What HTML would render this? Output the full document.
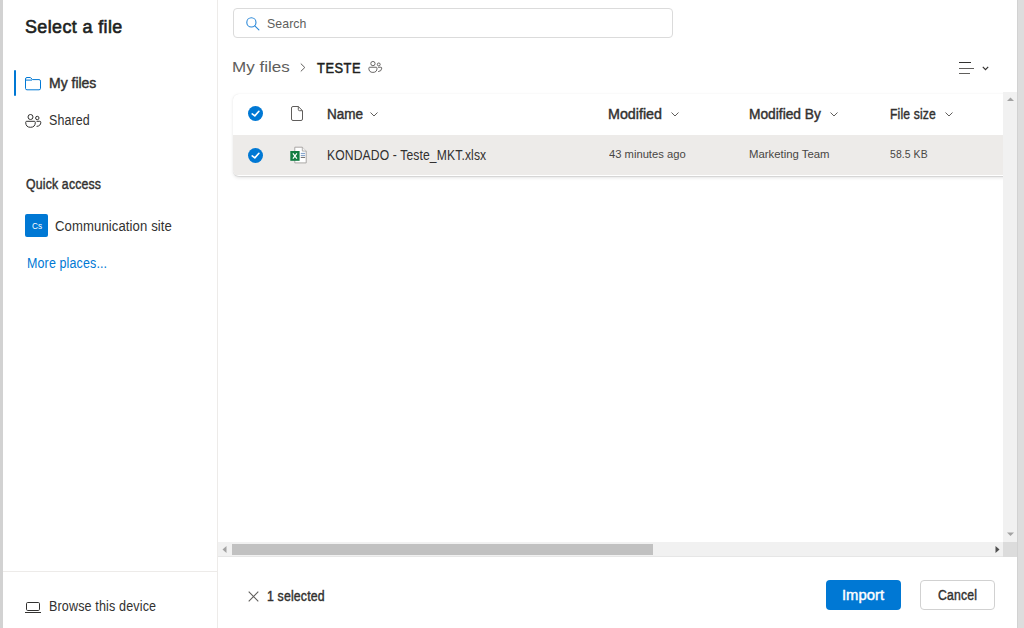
<!DOCTYPE html>
<html><head><meta charset="utf-8">
<style>
html,body{margin:0;padding:0;}
body{width:1024px;height:628px;position:relative;overflow:hidden;background:#fff;font-family:"Liberation Sans",sans-serif;}
.a{position:absolute;}
.t{position:absolute;white-space:nowrap;line-height:20px;transform-origin:0 0;font-family:"Liberation Sans",sans-serif;}
svg{position:absolute;overflow:visible;}
</style></head><body>
<!-- outer borders -->
<div class="a" style="left:0;top:0;width:3px;height:628px;background:#d2d2d2"></div>
<div class="a" style="left:1017px;top:0;width:7px;height:628px;background:#dddddd"></div>
<div class="a" style="left:1017px;top:0;width:1px;height:628px;background:#d2d2d2"></div>
<!-- dividers -->
<div class="a" style="left:217px;top:0;width:1px;height:628px;background:#edebe9"></div>
<div class="a" style="left:3px;top:571px;width:214px;height:1px;background:#edebe9"></div>
<!-- nav selection bar -->
<div class="a" style="left:14px;top:70px;width:2px;height:26px;background:#0078d4;border-radius:1px"></div>
<!-- folder icon -->
<svg style="left:25px;top:77px" width="16" height="14" viewBox="0 0 16 14">
<path d="M0.5 2 Q0.5 0.5 2 0.5 H5 Q5.6 0.5 6 1 L7.4 2.6 H14 Q15.5 2.6 15.5 4.1 V11.4 Q15.5 12.8 14 12.8 H2 Q0.5 12.8 0.5 11.4 Z M0.5 3.1 H7" fill="none" stroke="#0078d4" stroke-width="1"/>
</svg>
<!-- people icon (nav) -->
<svg style="left:25px;top:114px" width="17" height="14" viewBox="0 0 17 14">
<circle cx="5.5" cy="3" r="2.5" fill="none" stroke="#323130" stroke-width="1"/>
<circle cx="12.3" cy="4" r="1.7" fill="none" stroke="#323130" stroke-width="1"/>
<path d="M0.7 8.3 Q0.7 7.3 1.7 7.3 H9.3 Q10.3 7.3 10.3 8.3 Q10.3 13.3 5.5 13.3 Q0.7 13.3 0.7 8.3 Z" fill="none" stroke="#323130" stroke-width="1"/>
<path d="M11.5 7.3 H14.8 Q15.8 7.3 15.8 8.3 Q15.8 12 11.6 12.4" fill="none" stroke="#323130" stroke-width="1"/>
</svg>
<!-- Cs tile -->
<div class="a" style="left:25px;top:214px;width:23px;height:23px;background:#0078d4;border-radius:2px"></div>
<div class="t" style="left:31.9px;top:216.1px;font-size:9.3px;color:#fff;line-height:20px;transform:scaleX(0.88)">Cs</div>
<!-- laptop icon -->
<svg style="left:25px;top:602px" width="16" height="12" viewBox="0 0 16 12">
<rect x="1.5" y="0.5" width="13" height="8" rx="1.2" fill="none" stroke="#323130" stroke-width="1"/>
<path d="M0 10.5 H16" stroke="#323130" stroke-width="1"/>
</svg>
<!-- search box -->
<div class="a" style="left:233px;top:8px;width:438px;height:28px;border:1px solid #dbdbdb;border-radius:4px"></div>
<svg style="left:246px;top:17px" width="14" height="14" viewBox="0 0 14 14">
<circle cx="5.4" cy="5.4" r="4.6" fill="none" stroke="#2b88d8" stroke-width="1.1"/>
<path d="M8.8 8.8 L12.9 12.9" stroke="#2b88d8" stroke-width="1.1" stroke-linecap="round"/>
</svg>
<!-- breadcrumb chevron -->
<svg style="left:300px;top:63px" width="6" height="9" viewBox="0 0 6 9">
<path d="M0.8 0.6 L4.8 4.5 L0.8 8.4" fill="none" stroke="#605e5c" stroke-width="1"/>
</svg>
<!-- people icon (crumb) -->
<svg style="left:368px;top:61px" width="15" height="12" viewBox="0 0 17 14">
<circle cx="5.5" cy="3" r="2.5" fill="none" stroke="#605e5c" stroke-width="1.1"/>
<circle cx="12.3" cy="4" r="1.7" fill="none" stroke="#605e5c" stroke-width="1.1"/>
<path d="M0.7 8.3 Q0.7 7.3 1.7 7.3 H9.3 Q10.3 7.3 10.3 8.3 Q10.3 13.3 5.5 13.3 Q0.7 13.3 0.7 8.3 Z" fill="none" stroke="#605e5c" stroke-width="1.1"/>
<path d="M11.5 7.3 H14.8 Q15.8 7.3 15.8 8.3 Q15.8 12 11.6 12.4" fill="none" stroke="#605e5c" stroke-width="1.1"/>
</svg>
<!-- view switcher -->
<div class="a" style="left:959px;top:62px;width:12px;height:1px;background:#323130"></div>
<div class="a" style="left:959px;top:67.5px;width:15px;height:1px;background:#605e5c"></div>
<div class="a" style="left:959px;top:73px;width:11px;height:1px;background:#605e5c"></div>
<svg style="left:982px;top:66px" width="7" height="5" viewBox="0 0 7 5">
<path d="M0.8 0.8 L3.5 3.6 L6.2 0.8" fill="none" stroke="#323130" stroke-width="1.2"/>
</svg>

<!-- table card -->
<div class="a" style="left:218px;top:86px;width:785px;height:100px;overflow:hidden">
<div class="a" style="left:15px;top:8px;width:800px;height:82px;border-radius:6px;background:#fff;box-shadow:0 1.6px 3.6px rgba(0,0,0,0.10),0 0.3px 0.9px rgba(0,0,0,0.09);overflow:hidden">
  <div class="a" style="left:0;top:41px;width:800px;height:40px;background:#edebe9"></div>
</div></div>
<!-- check circles -->
<svg style="left:248px;top:106px" width="15" height="15" viewBox="0 0 15 15">
<circle cx="7.5" cy="7.5" r="7.5" fill="#0078d4"/>
<path d="M4.2 7.9 L6.8 9.9 L10.9 5.3" fill="none" stroke="#fff" stroke-width="1.6" stroke-linecap="round" stroke-linejoin="round"/>
</svg>
<svg style="left:248px;top:147.5px" width="15" height="15" viewBox="0 0 15 15">
<circle cx="7.5" cy="7.5" r="7.5" fill="#0078d4"/>
<path d="M4.2 7.9 L6.8 9.9 L10.9 5.3" fill="none" stroke="#fff" stroke-width="1.6" stroke-linecap="round" stroke-linejoin="round"/>
</svg>
<!-- header file icon -->
<svg style="left:291px;top:106px" width="12" height="15" viewBox="0 0 12 15">
<path d="M0.5 2 Q0.5 0.5 2 0.5 H7.3 L11.5 4.7 V13 Q11.5 14.5 10 14.5 H2 Q0.5 14.5 0.5 13 Z M7.3 0.5 V3.5 Q7.3 4.7 8.5 4.7 H11.5" fill="none" stroke="#605e5c" stroke-width="1" stroke-linejoin="round"/>
</svg>
<!-- excel icon -->
<svg style="left:290px;top:146px" width="18" height="18" viewBox="0 0 18 18">
<path d="M4.8 1.2 H12.3 L16.2 5.1 V16.9 H4.8 Z" fill="#fff" stroke="#a19f9d" stroke-width="0.9" stroke-linejoin="round"/>
<path d="M12.3 1.2 V5.1 H16.2" fill="#f3f2f1" stroke="#a19f9d" stroke-width="0.8"/>
<path d="M10.8 7.4 H15.1 M10.8 9.4 H15.1" stroke="#6a8fbf" stroke-width="0.9"/>
<path d="M10.8 11.4 H15.1" stroke="#555" stroke-width="0.9"/>
<rect x="0.3" y="5" width="9.3" height="9.8" fill="#107c41"/>
<path d="M2.9 7.3 L6.9 12.6 M6.9 7.3 L2.9 12.6" stroke="#fff" stroke-width="1.2"/>
</svg>
<!-- header chevrons -->
<svg style="left:370px;top:112px" width="8" height="5" viewBox="0 0 8 5"><path d="M0.5 0.5 L4 4 L7.5 0.5" fill="none" stroke="#605e5c" stroke-width="1"/></svg>
<svg style="left:671px;top:112px" width="8" height="5" viewBox="0 0 8 5"><path d="M0.5 0.5 L4 4 L7.5 0.5" fill="none" stroke="#605e5c" stroke-width="1"/></svg>
<svg style="left:830px;top:112px" width="8" height="5" viewBox="0 0 8 5"><path d="M0.5 0.5 L4 4 L7.5 0.5" fill="none" stroke="#605e5c" stroke-width="1"/></svg>
<svg style="left:944.5px;top:112px" width="8" height="5" viewBox="0 0 8 5"><path d="M0.5 0.5 L4 4 L7.5 0.5" fill="none" stroke="#605e5c" stroke-width="1"/></svg>

<!-- vertical scrollbar -->
<div class="a" style="left:1003px;top:92px;width:14px;height:450px;background:#f1f1f1"></div>
<svg style="left:1007px;top:97px" width="7" height="5" viewBox="0 0 7 5"><path d="M0 4 L3.5 0.5 L7 4 Z" fill="#a3a3a3"/></svg>
<svg style="left:1007px;top:532px" width="7" height="5" viewBox="0 0 7 5"><path d="M0 0.5 L3.5 4 L7 0.5 Z" fill="#a3a3a3"/></svg>
<!-- horizontal scrollbar -->
<div class="a" style="left:218px;top:542px;width:785px;height:15px;background:#f1f1f1"></div>
<div class="a" style="left:218px;top:556px;width:785px;height:1px;background:#e6e6e6"></div>
<div class="a" style="left:232px;top:544px;width:421px;height:11px;background:#c1c1c1"></div>
<svg style="left:222px;top:546px" width="5" height="7" viewBox="0 0 5 7"><path d="M4.5 0 L0.5 3.5 L4.5 7 Z" fill="#a3a3a3"/></svg>
<svg style="left:995px;top:546px" width="5" height="7" viewBox="0 0 5 7"><path d="M0.5 0 L4.5 3.5 L0.5 7 Z" fill="#505050"/></svg>
<div class="a" style="left:1003px;top:542px;width:14px;height:15px;background:#dcdcdc"></div>

<!-- footer -->
<svg style="left:248px;top:591px" width="11" height="11" viewBox="0 0 11 11"><path d="M0.7 0.7 L10.3 10.3 M10.3 0.7 L0.7 10.3" stroke="#605e5c" stroke-width="1.1"/></svg>
<div class="a" style="left:826px;top:580px;width:75px;height:30px;background:#0078d4;border-radius:4px"></div>
<div class="a" style="left:920px;top:580px;width:73px;height:28px;border:1px solid #d1d1d1;border-radius:4px;background:#fff"></div>

<div class="t" style="left:24.78px;top:17.43px;font-size:17.5px;font-weight:400;-webkit-text-stroke:0.6px #201f1e;color:#201f1e;letter-spacing:0.4px;transform:scaleX(1.0213)">Select a file</div>
<div class="t" style="left:49.10px;top:73.05px;font-size:14px;font-weight:400;-webkit-text-stroke:0.42px #323130;color:#323130;letter-spacing:0px;transform:scaleX(0.9978)">My files</div>
<div class="t" style="left:49.21px;top:109.75px;font-size:14px;font-weight:400;color:#323130;letter-spacing:0.15px;transform:scaleX(0.8886)">Shared</div>
<div class="t" style="left:25.90px;top:174.15px;font-size:14px;font-weight:400;-webkit-text-stroke:0.42px #323130;color:#323130;letter-spacing:0.2px;transform:scaleX(0.8776)">Quick access</div>
<div class="t" style="left:54.66px;top:216.05px;font-size:14px;font-weight:400;color:#323130;letter-spacing:0.1px;transform:scaleX(0.9374)">Communication site</div>
<div class="t" style="left:26.71px;top:253.15px;font-size:14px;font-weight:400;color:#0078d4;letter-spacing:0.15px;transform:scaleX(0.8909)">More places...</div>
<div class="t" style="left:49.40px;top:596.25px;font-size:14px;font-weight:400;color:#323130;letter-spacing:0.15px;transform:scaleX(0.8975)">Browse this device</div>
<div class="t" style="left:266.86px;top:14.49px;font-size:13px;font-weight:400;color:#605e5c;letter-spacing:0.1px;transform:scaleX(0.9450)">Search</div>
<div class="t" style="left:231.90px;top:57.23px;font-size:15.5px;font-weight:400;color:#605e5c;letter-spacing:0px;transform:scaleX(1.0980)">My files</div>
<div class="t" style="left:317.20px;top:57.84px;font-size:14.6px;font-weight:400;-webkit-text-stroke:0.5px #201f1e;color:#201f1e;letter-spacing:0.6px;transform:scaleX(0.8816)">TESTE</div>
<div class="t" style="left:326.73px;top:103.95px;font-size:14px;font-weight:400;-webkit-text-stroke:0.42px #323130;color:#323130;letter-spacing:0px;transform:scaleX(0.9667)">Name</div>
<div class="t" style="left:326.53px;top:145.45px;font-size:14px;font-weight:400;color:#323130;letter-spacing:0.15px;transform:scaleX(0.8667)">KONDADO - Teste_MKT.xlsx</div>
<div class="t" style="left:608.28px;top:103.95px;font-size:14px;font-weight:400;-webkit-text-stroke:0.42px #323130;color:#323130;letter-spacing:0px;transform:scaleX(1.0192)">Modified</div>
<div class="t" style="left:609.00px;top:143.71px;font-size:11.5px;font-weight:400;color:#484644;letter-spacing:0px;transform:scaleX(0.9744)">43 minutes ago</div>
<div class="t" style="left:749.12px;top:103.95px;font-size:14px;font-weight:400;-webkit-text-stroke:0.42px #323130;color:#323130;letter-spacing:0px;transform:scaleX(0.9822)">Modified By</div>
<div class="t" style="left:749.01px;top:143.71px;font-size:11.5px;font-weight:400;color:#484644;letter-spacing:0px;transform:scaleX(0.9875)">Marketing Team</div>
<div class="t" style="left:890.33px;top:103.95px;font-size:14px;font-weight:400;-webkit-text-stroke:0.42px #323130;color:#323130;letter-spacing:0.2px;transform:scaleX(0.8654)">File size</div>
<div class="t" style="left:889.89px;top:143.91px;font-size:11.5px;font-weight:400;color:#484644;letter-spacing:0.1px;transform:scaleX(0.9050)">58.5 KB</div>
<div class="t" style="left:267.42px;top:586.35px;font-size:14px;font-weight:400;-webkit-text-stroke:0.42px #323130;color:#323130;letter-spacing:0.2px;transform:scaleX(0.8781)">1 selected</div>
<div class="t" style="left:841.74px;top:585.15px;font-size:14px;font-weight:400;-webkit-text-stroke:0.42px #ffffff;color:#ffffff;letter-spacing:0px;transform:scaleX(1.0590)">Import</div>
<div class="t" style="left:937.90px;top:585.25px;font-size:14px;font-weight:400;-webkit-text-stroke:0.42px #323130;color:#323130;letter-spacing:0.2px;transform:scaleX(0.8727)">Cancel</div>
</body></html>
